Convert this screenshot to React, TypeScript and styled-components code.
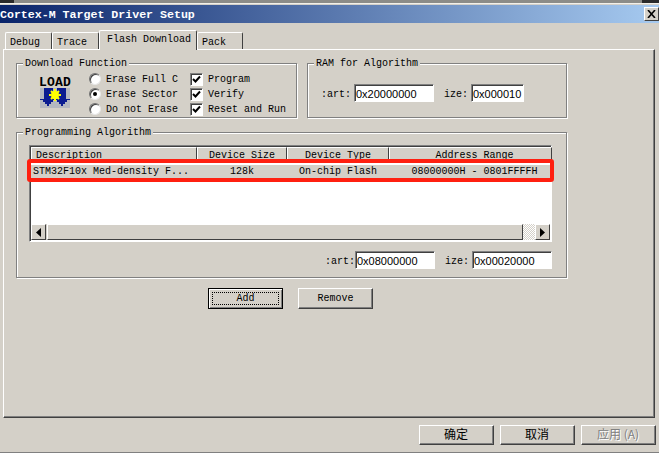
import React from 'react';
import styled, { createGlobalStyle } from 'styled-components';

const FACE = '#d4d0c8';
const SHADOW = '#808080';
const DARK = '#404040';
const MONO = `'Liberation Mono', 'DejaVu Sans Mono', monospace`;
const SANS = `'Liberation Sans', Arial, sans-serif`;
const CJK = `'Noto Sans CJK SC', 'Liberation Sans', sans-serif`;

const GlobalStyle = createGlobalStyle`
  html, body { margin: 0; padding: 0; background: ${FACE}; }
  * { box-sizing: border-box; }
`;

const Window = styled.div`
  width: 659px;
  height: 453px;
  background: ${FACE};
  display: flex;
  flex-direction: column;
  overflow: hidden;
  font-family: ${MONO};
  font-size: 10px;
  color: #000;
`;

const TopStrip = styled.div`
  height: 5px;
  flex-shrink: 0;
  background:
    linear-gradient(#2a2a2a, #2a2a2a) left top / 14px 3px no-repeat,
    linear-gradient(#2a2a2a, #2a2a2a) right top / 17px 3px no-repeat,
    linear-gradient(#8c8c88 0 3px, #f2f0ea 3px 4px, ${FACE} 4px);
`;

const TitleBar = styled.div`
  height: 18px;
  flex-shrink: 0;
  display: flex;
  align-items: center;
  justify-content: space-between;
  background: linear-gradient(90deg, #0a246a, #a6caf0);
  color: #fff;
  font-weight: bold;
  font-size: 11.6px;
  white-space: nowrap;
`;

const CloseBtn = styled.div`
  width: 15px;
  height: 14px;
  background: ${FACE};
  border: 1px solid;
  border-color: #fff ${DARK} ${DARK} #fff;
  display: flex;
  align-items: center;
  justify-content: center;
`;

const Body = styled.div`
  flex: 1;
  display: flex;
  flex-direction: column;
  padding: 7px 4px 0 3px;
`;

const TabStrip = styled.div`
  display: flex;
  align-items: flex-end;
  height: 19px;
  padding-left: 2px;
`;

const Tab = styled.div<{ $w: number; $active?: boolean }>`
  width: ${p => p.$w}px;
  height: ${p => (p.$active ? 20 : 17)}px;
  margin-bottom: ${p => (p.$active ? -1 : 0)}px;
  position: relative;
  z-index: ${p => (p.$active ? 2 : 0)};
  background: ${FACE};
  border: 1px solid;
  border-color: #fff ${DARK} ${FACE} #fff;
  border-bottom: none;
  border-radius: 2px 2px 0 0;
  padding: ${p => (p.$active ? '2px 0 0 7px' : '3px 0 0 4px')};
  line-height: 13px;
  white-space: nowrap;
`;

const TabPage = styled.div`
  height: 369px;
  border: 1px solid;
  border-color: #fff ${DARK} ${DARK} #fff;
  box-shadow: inset -1px -1px 0 ${SHADOW};
  padding: 13px 0 0 12px;
  display: flex;
  flex-direction: column;
  align-items: flex-start;
`;

const GroupRow = styled.div`
  display: flex;
  gap: 10px;
  margin-bottom: 14px;
`;

const Group = styled.div<{ $w: number; $h: number }>`
  width: ${p => p.$w}px;
  height: ${p => p.$h}px;
  position: relative;
  border: 1px solid ${SHADOW};
  box-shadow: 1px 1px 0 #fff, inset 1px 1px 0 #fff;
`;

const Legend = styled.span`
  position: absolute;
  top: -6px;
  left: 6px;
  padding: 0 2px;
  background: ${FACE};
  line-height: 12px;
  white-space: nowrap;
`;

const DownloadBody = styled.div`
  display: flex;
  padding: 7px 0 0 22px;
`;

const LoadIcon = styled.div`
  width: 32px;
  margin-top: 6px;
  display: flex;
  flex-direction: column;
  align-items: center;
`;

const LoadLabel = styled.span`
  font-family: ${MONO};
  font-weight: bold;
  font-size: 13px;
  line-height: 11px;
  height: 11px;
  letter-spacing: 0.2px;
`;

const OptionCol = styled.div<{ $w: number; $ml: number; $mt?: number }>`
  width: ${p => p.$w}px;
  margin-left: ${p => p.$ml}px;
  margin-top: ${p => p.$mt ?? 0}px;
  display: flex;
  flex-direction: column;
`;

const Option = styled.div`
  height: 15px;
  display: flex;
  align-items: center;
  gap: 5px;
  white-space: nowrap;
  overflow: hidden;
`;

const RadioText = styled.span`
  padding-top: 1px;
`;

const Radio = styled.span<{ $on?: boolean }>`
  width: 12px;
  height: 12px;
  flex-shrink: 0;
  border-radius: 50%;
  background: #fff;
  border: 1px solid;
  border-color: #707070 #e8e8e8 #e8e8e8 #707070;
  box-shadow: inset 1px 1px 0 ${DARK};
  display: flex;
  align-items: center;
  justify-content: center;
  &::after {
    content: '';
    width: 4px;
    height: 4px;
    border-radius: 50%;
    background: ${p => (p.$on ? '#000' : 'transparent')};
  }
`;

const Check = styled.span`
  width: 13px;
  height: 13px;
  flex-shrink: 0;
  background: #fff;
  border: 1px solid;
  border-color: ${SHADOW} #fff #fff ${SHADOW};
  box-shadow: inset 1px 1px 0 ${DARK};
  display: flex;
  align-items: center;
  justify-content: center;
`;

const FieldRow = styled.div<{ $pl?: number; $pt?: number; $pr?: number; $end?: boolean }>`
  display: flex;
  align-items: center;
  justify-content: ${p => (p.$end ? 'flex-end' : 'flex-start')};
  padding: ${p => p.$pt ?? 0}px ${p => p.$pr ?? 0}px 0 ${p => p.$pl ?? 0}px;
`;

const FieldLabel = styled.span<{ $w: number }>`
  width: ${p => p.$w}px;
  text-align: right;
  padding: 2px 3px 0 0;
  white-space: nowrap;
`;

const Field = styled.div<{ $w: number }>`
  width: ${p => p.$w}px;
  height: 18px;
  background: #fff;
  border: 1px solid;
  border-color: ${SHADOW} #fff #fff ${SHADOW};
  box-shadow: inset 1px 1px 0 ${DARK};
  font-family: ${SANS};
  font-size: 11px;
  line-height: 16px;
  padding: 1px 0 0 1px;
  white-space: nowrap;
  overflow: hidden;
`;

const ListWrap = styled.div`
  position: relative;
  margin: 12px 0 0 12px;
  width: 523px;
  height: 97px;
  background: #fff;
  border: 1px solid;
  border-color: ${SHADOW} #fff #fff ${SHADOW};
  box-shadow: inset 1px 1px 0 ${DARK};
  padding: 1px;
  display: flex;
  flex-direction: column;
`;

const ListGrid = styled.div`
  display: grid;
  grid-template-columns: 166px 90px 102px 163px;
`;

const HeaderCell = styled.div<{ $pl?: number }>`
  height: 16px;
  background: ${FACE};
  border: 1px solid;
  border-color: #fff ${DARK} ${SHADOW} #fff;
  text-align: ${p => (p.$pl === 4 ? 'left' : 'center')};
  padding-left: ${p => p.$pl ?? 0}px;
  line-height: 15px;
  white-space: nowrap;
  overflow: hidden;
`;

const RowCell = styled.div<{ $pl?: number }>`
  margin-top: 2px;
  height: 13px;
  background: ${FACE};
  text-align: ${p => (p.$pl === 2 ? 'left' : 'center')};
  padding-left: ${p => p.$pl ?? 0}px;
  line-height: 13px;
  white-space: nowrap;
`;

const ListSpacer = styled.div`
  flex: 1;
`;

const Scrollbar = styled.div`
  height: 16px;
  display: flex;
  background: ${FACE};
`;

const ScrollBtn = styled.div`
  width: 15px;
  background: ${FACE};
  border: 1px solid;
  border-color: #fff ${DARK} ${DARK} #fff;
  display: flex;
  align-items: center;
  justify-content: center;
`;

const ScrollThumb = styled.div`
  flex: 1;
  background: ${FACE};
  border: 1px solid;
  border-color: #fff ${DARK} ${DARK} #fff;
  margin-left: 1px;
`;

const ScrollTrack = styled.div`
  width: 12px;
  background: repeating-conic-gradient(#fff 0 25%, ${FACE} 0 50%) 0 0 / 2px 2px;
`;

const Highlight = styled.div`
  position: absolute;
  left: -3px;
  top: 13px;
  width: 527px;
  height: 23px;
  border: 4px solid #ff2010;
  border-radius: 3px;
  pointer-events: none;
`;

const ActionRow = styled.div`
  display: flex;
  gap: 15px;
  margin: 10px 0 0 192px;
`;

const Btn = styled.div<{ $primary?: boolean }>`
  width: 75px;
  height: 21px;
  position: relative;
  background: ${FACE};
  border: 1px solid;
  border-color: ${p => (p.$primary ? '#000' : '#fff')} ${p => (p.$primary ? '#000' : DARK)} ${p => (p.$primary ? '#000' : DARK)} ${p => (p.$primary ? '#000' : '#fff')};
  box-shadow: ${p => (p.$primary ? `inset 1px 1px 0 #fff, inset -1px -1px 0 ${SHADOW}` : `inset -1px -1px 0 ${SHADOW}`)};
  display: flex;
  align-items: center;
  justify-content: center;
  font-size: 10px;
`;

const FocusRing = styled.span`
  position: absolute;
  inset: 3px;
  border: 1px dotted #000;
`;

const Footer = styled.div`
  display: flex;
  justify-content: flex-end;
  gap: 6px;
  margin-top: 7px;
  margin-right: -1px;
`;

const FooterBtn = styled(Btn)<{ $off?: boolean }>`
  height: 20px;
  padding: 0 1px 3px 0;
  font-family: ${CJK};
  font-size: 12px;
  color: ${p => (p.$off ? SHADOW : '#000')};
  text-shadow: ${p => (p.$off ? '1px 1px 0 #fff' : 'none')};
`;

const BottomLine = styled.div`
  height: 1px;
  margin-top: auto;
  margin-bottom: 0;
  background: ${SHADOW};
`;

const LoadArt = () => (
  <svg width="30" height="20" viewBox="0 0 30 20">
    <rect width="30" height="20" fill="#b4b8c0" />
    <path d="M4 0H13V11H15V12H13V14H11V16H9V18H7V16H5V14H3V12H0V11H4Z" fill="#0a1c90" />
    <path d="M17 0H26V11H30V12H27V14H25V16H23V18H21V16H19V14H17V12H15V11H17Z" fill="#0a1c90" />
    <path d="M15 1V3M15 11V13M9 7H11M19 7H21M11 3L12.5 4.5M19 3L17.5 4.5M11 11L12.5 9.5M19 11L17.5 9.5" stroke="#ffff00" strokeWidth="2" />
    <circle cx="15" cy="7" r="4" fill="#ffff00" />
  </svg>
);

const CheckMark = () => (
  <svg width="9" height="9" viewBox="0 0 9 9">
    <path d="M1 4L3.5 6.5L8 1.5" fill="none" stroke="#000" strokeWidth="2" />
  </svg>
);

const ArrowLeft = () => (
  <svg width="5" height="9" viewBox="0 0 5 9"><path d="M5 0V9L0 4.5Z" fill="#000" /></svg>
);

const ArrowRight = () => (
  <svg width="5" height="9" viewBox="0 0 5 9"><path d="M0 0V9L5 4.5Z" fill="#000" /></svg>
);

const CloseGlyph = () => (
  <svg width="9" height="8" viewBox="0 0 9 8">
    <path d="M1 0L8 8M8 0L1 8" stroke="#000" strokeWidth="1.6" />
  </svg>
);

const TABS = [
  { label: 'Debug', w: 47 },
  { label: 'Trace', w: 47 },
  { label: 'Flash Download', w: 98, active: true },
  { label: 'Pack', w: 46 },
];

const RADIOS = [
  { label: 'Erase Full C' },
  { label: 'Erase Sector', on: true },
  { label: 'Do not Erase' },
];

const CHECKS = ['Program', 'Verify', 'Reset and Run'];

export default function App() {
  return (
    <Window>
      <GlobalStyle />
      <TopStrip />
      <TitleBar>
        <span>Cortex-M Target Driver Setup</span>
        <CloseBtn><CloseGlyph /></CloseBtn>
      </TitleBar>
      <Body>
        <TabStrip>
          {TABS.map(t => (
            <Tab key={t.label} $w={t.w} $active={t.active}>{t.label}</Tab>
          ))}
        </TabStrip>
        <TabPage>
          <GroupRow>
            <Group $w={281} $h={55}>
              <Legend>Download Function</Legend>
              <DownloadBody>
                <LoadIcon>
                  <LoadLabel>LOAD</LoadLabel>
                  <LoadArt />
                </LoadIcon>
                <OptionCol $w={89} $ml={18}>
                  {RADIOS.map(r => (
                    <Option key={r.label}>
                      <Radio $on={r.on} />
                      <RadioText>{r.label}</RadioText>
                    </Option>
                  ))}
                </OptionCol>
                <OptionCol $w={96} $ml={12} $mt={1}>
                  {CHECKS.map(c => (
                    <Option key={c}>
                      <Check><CheckMark /></Check>
                      {c}
                    </Option>
                  ))}
                </OptionCol>
              </DownloadBody>
            </Group>
            <Group $w={260} $h={55}>
              <Legend>RAM for Algorithm</Legend>
              <FieldRow $pl={13} $pt={20}>
                <FieldLabel $w={33}>:art:</FieldLabel>
                <Field $w={80}>0x20000000</Field>
                <FieldLabel $w={37}>ize:</FieldLabel>
                <Field $w={53}>0x000010</Field>
              </FieldRow>
            </Group>
          </GroupRow>
          <Group $w={551} $h={146}>
            <Legend>Programming Algorithm</Legend>
            <ListWrap>
              <ListGrid>
                <HeaderCell $pl={4}>Description</HeaderCell>
                <HeaderCell>Device Size</HeaderCell>
                <HeaderCell>Device Type</HeaderCell>
                <HeaderCell $pl={8}>Address Range</HeaderCell>
                <RowCell $pl={2}>STM32F10x Med-density F...</RowCell>
                <RowCell>128k</RowCell>
                <RowCell>On-chip Flash</RowCell>
                <RowCell $pl={8}>08000000H - 0801FFFFH</RowCell>
              </ListGrid>
              <ListSpacer />
              <Scrollbar>
                <ScrollBtn><ArrowLeft /></ScrollBtn>
                <ScrollThumb />
                <ScrollTrack />
                <ScrollBtn><ArrowRight /></ScrollBtn>
              </Scrollbar>
              <Highlight />
            </ListWrap>
            <FieldRow $end $pt={9} $pr={14}>
              <FieldLabel $w={30}>:art:</FieldLabel>
              <Field $w={80}>0x08000000</Field>
              <FieldLabel $w={37}>ize:</FieldLabel>
              <Field $w={80}>0x00020000</Field>
            </FieldRow>
          </Group>
          <ActionRow>
            <Btn $primary><FocusRing />Add</Btn>
            <Btn>Remove</Btn>
          </ActionRow>
        </TabPage>
        <Footer>
          <FooterBtn>确定</FooterBtn>
          <FooterBtn>取消</FooterBtn>
          <FooterBtn $off>应用 (A)</FooterBtn>
        </Footer>
      </Body>
      <BottomLine />
    </Window>
  );
}
